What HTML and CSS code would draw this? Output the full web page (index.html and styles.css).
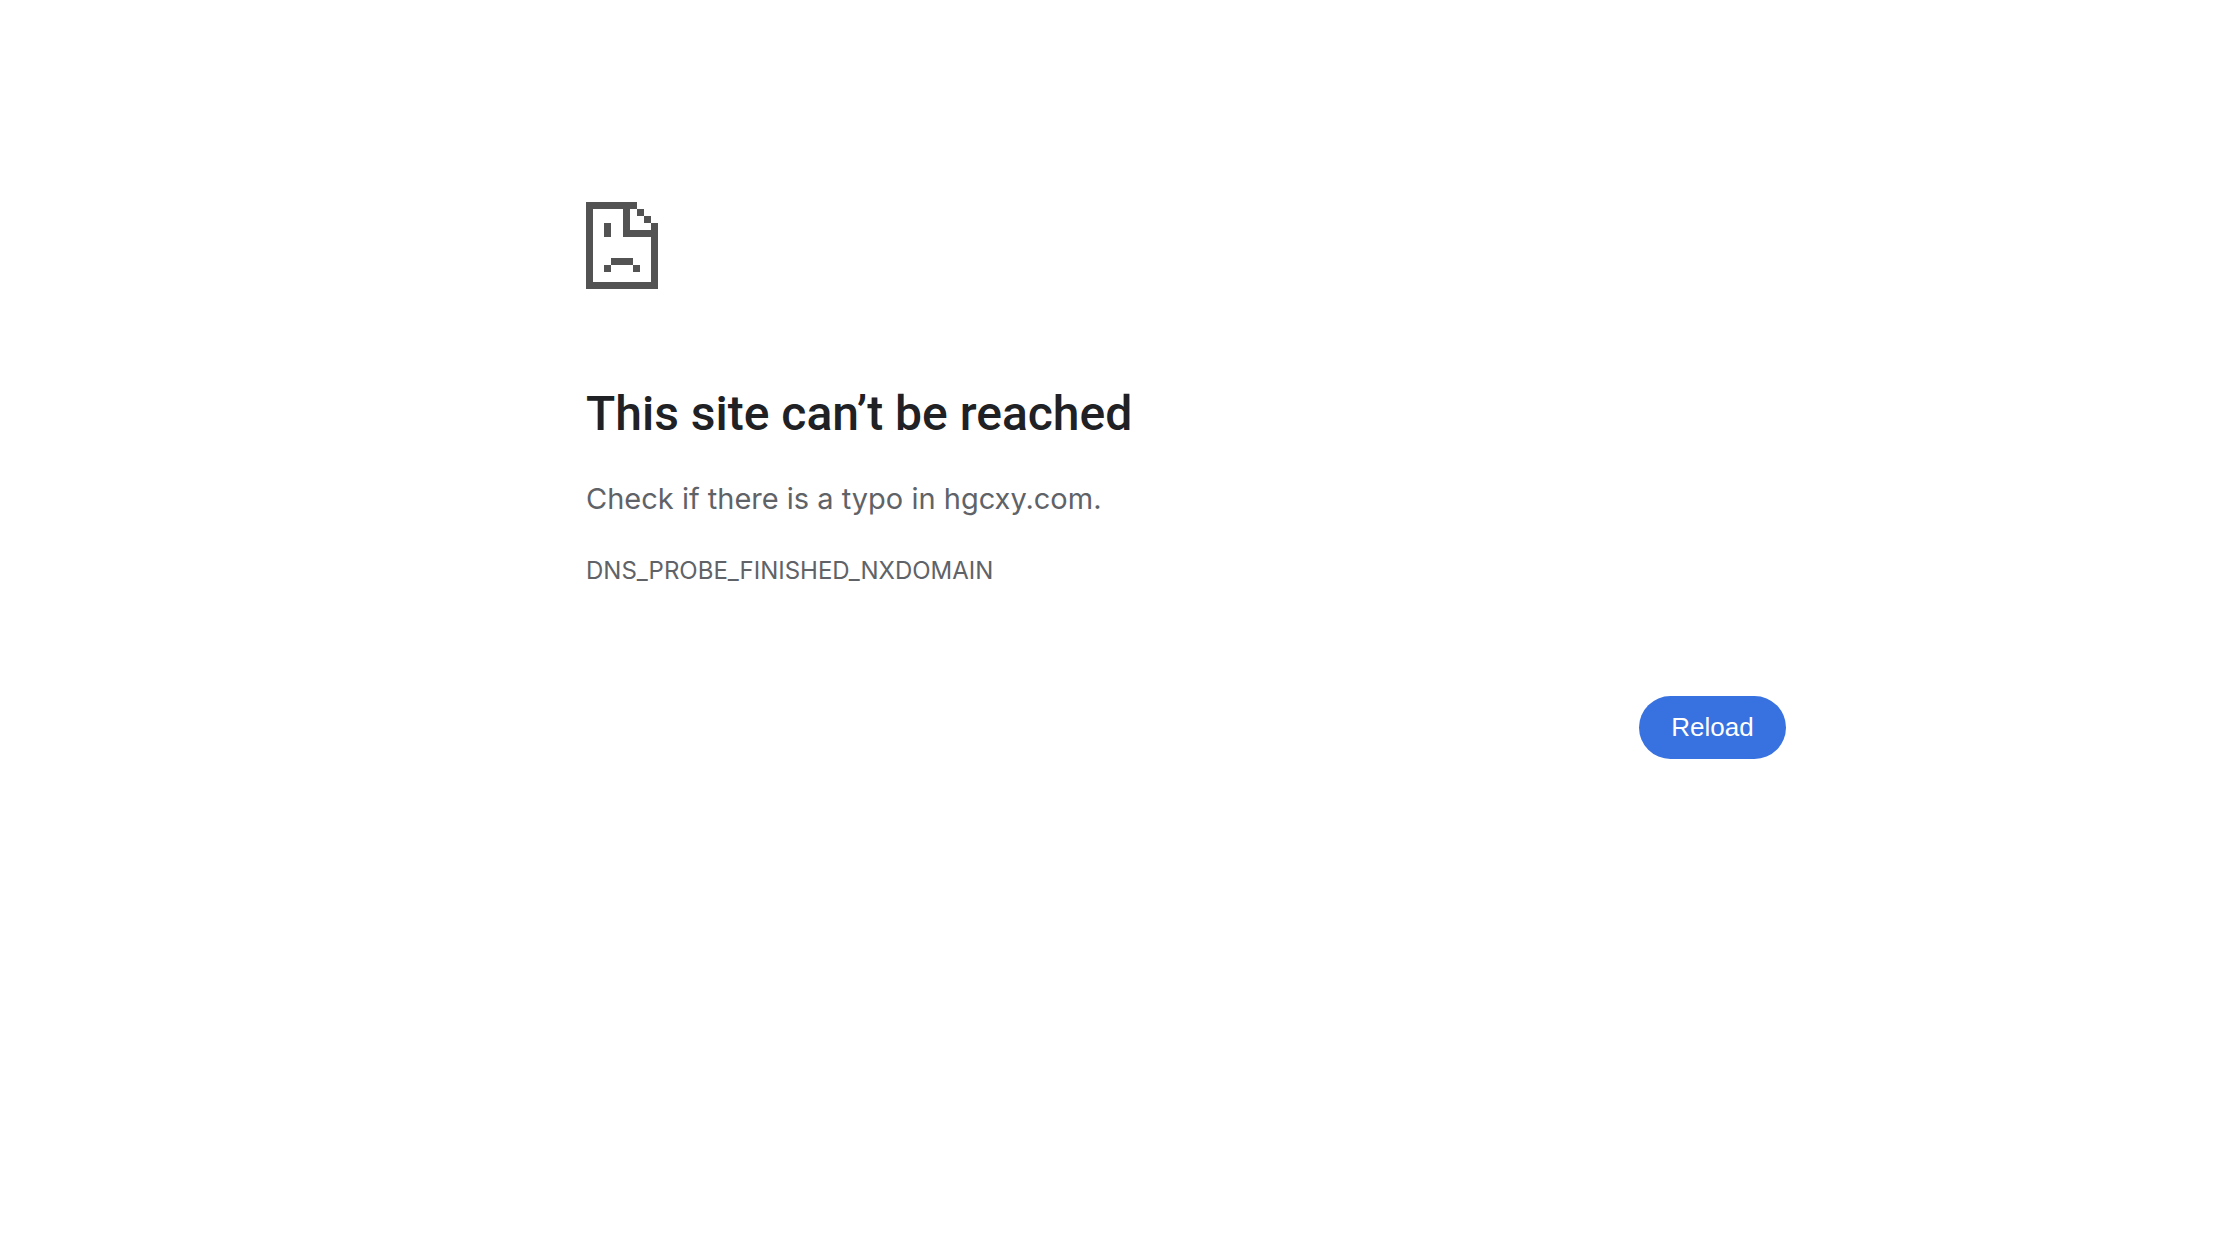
FILE: index.html
```html
<!DOCTYPE html>
<html lang="en">
<head>
    <meta charset="UTF-8">
    <meta name="viewport" content="width=device-width, initial-scale=1.0">
    <title>hgcxy.com</title>
    <link rel="stylesheet" href="styles.css">
</head>
<body>
    <main class="error-page">
        <svg class="icon" viewBox="0 0 72 87" aria-hidden="true">
            <!-- page outline -->
            <path d="M0 0H51V7H7V80H65V35H37V7H44V28H65V21H72V87H0Z"/>
            <!-- folded corner -->
            <path d="M51 7H58V14H51ZM58 14H65V21H58Z"/>
            <!-- sad face -->
            <path d="M18 21H25V35H18ZM25 56H47V63H25ZM18 63H25V70H18ZM47 63H54V70H47Z"/>
        </svg>
        <h1>This site can’t be reached</h1>
        <p class="summary">Check if there is a typo in hgcxy.com.</p>
        <p class="error-code">DNS_PROBE_FINISHED_NXDOMAIN</p>
        <div class="buttons">
            <button type="button" id="reloadButton">Reload</button>
        </div>
    </main>

    <script>
        document.getElementById("reloadButton").addEventListener("click", function() {
            location.reload();
        });
    </script>
</body>
</html>
```
FILE: styles.css
```css
body {
    font-family: Inter, sans-serif;
    background: #fff;
    color: #5f6368;
    margin: 0;
    padding-left: 148px;
}

.error-page {
    max-width: 1200px;
    margin: 0 auto;
    padding-top: 202px;
}

.icon {
    display: block;
    width: 72px;
    height: 87px;
    fill: #535353;
    shape-rendering: crispEdges;
}

h1 {
    margin: 95px 0 31px;
    color: #202124;
    font-family: Roboto, sans-serif;
    font-size: 48px;
    font-weight: 500;
    line-height: 60px;
}

p {
    margin: 0;
}

.summary {
    margin-bottom: 28px;
    font-size: 29px;
    line-height: 48px;
}

.error-code {
    font-size: 24px;
    line-height: 40px;
}

.buttons {
    display: flex;
    justify-content: flex-end;
    margin-top: 105px;
}

button {
    min-width: 147px;
    padding: 16px 32px;
    border: none;
    border-radius: 32px;
    background: #3871e0;
    color: #fff;
    font-family: "Liberation Sans", Arial, sans-serif;
    font-size: 26px;
    line-height: 31px;
    cursor: pointer;
}
```
